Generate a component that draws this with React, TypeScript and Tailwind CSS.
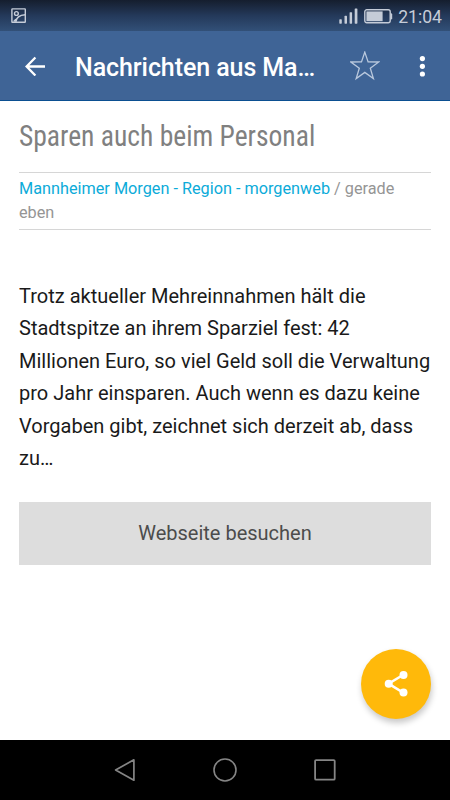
import React from 'react';

const articleLines = [
  'Trotz aktueller Mehreinnahmen hält die',
  'Stadtspitze an ihrem Sparziel fest: 42',
  'Millionen Euro, so viel Geld soll die Verwaltung',
  'pro Jahr einsparen. Auch wenn es dazu keine',
  'Vorgaben gibt, zeichnet sich derzeit ab, dass',
  'zu…'
];

function StatusBar() {
  return (
    <div className="h-[31px] flex-shrink-0 bg-gradient-to-b from-[#151e2e] via-[#24395a] via-50% to-[#325078] flex items-center justify-between pl-[11px] pr-2 text-[#c5ccd8]">
      <svg className="w-[15px] h-[15px]" viewBox="0 0 15 15" fill="none" stroke="currentColor" strokeWidth="1.4">
        <rect x="0.9" y="0.9" width="13.4" height="13.4" rx="0.5" />
        <circle cx="5.4" cy="5.5" r="1.9" />
        <path d="M4.8 14c.4-4.2 3.6-7 9.4-7.3M4.9 11.2 2.7 13.4" />
      </svg>
      <div className="flex items-center">
        {/* Signal */}
        <svg className="w-[19px] h-4" viewBox="0 0 19 16" fill="currentColor">
          <rect x="0.3" y="11.3" width="2.5" height="4.4" rx="0.6" />
          <rect x="5.5" y="7.8" width="2.5" height="7.9" rx="0.6" />
          <rect x="10.6" y="4.2" width="2.5" height="11.5" rx="0.6" />
          <rect x="15.7" y="0.4" width="2.7" height="15.3" rx="0.6" />
        </svg>
        {/* Battery */}
        <svg className="w-[29px] h-[15px] ml-1.5 mt-px" viewBox="0 0 29 15">
          <rect x="0.8" y="0.8" width="25.4" height="13" rx="2" fill="none" stroke="currentColor" strokeWidth="1.4" />
          <rect x="2.4" y="2.4" width="16.2" height="9.8" fill="currentColor" />
          <path d="M26.4 4.2h.6a1.2 1.2 0 0 1 1.2 1.2v3.8a1.2 1.2 0 0 1-1.2 1.2h-.6z" fill="currentColor" />
        </svg>
        <span className="ml-[5px] mt-0.5 text-[17.6px] leading-[22px]">21:04</span>
      </div>
    </div>
  );
}

function AppBar() {
  return (
    <header className="h-[70px] flex-shrink-0 bg-[#3f6496] border-b border-[#0b4f91] flex items-center text-white">
      <svg className="w-5 h-5 ml-[25px]" viewBox="0 0 20 20" fill="none" stroke="currentColor" strokeWidth="2.3">
        <path d="M20 10.5H2M10.4 1.5 1.6 10.5l8.8 9" />
      </svg>
      <h1 className="ml-[30px] mt-[5px] w-[241px] text-[25px] tracking-[-0.08px] font-medium whitespace-nowrap">Nachrichten aus Ma…</h1>
      <svg className="w-[30px] h-[30px] ml-[34px]" viewBox="0 0 30 30" fill="none" stroke="#b9c8dd" strokeWidth="1.3">
        <path d="m14.8 1.1 3.3 9.8 10.6.1-8.4 6.3 3.1 10.3-8.6-6.2-8.6 6.2 3.1-10.3L.9 11l10.6-.1z" />
      </svg>
      <svg className="w-1.5 h-[22px] ml-[39px]" viewBox="0 0 6 22" fill="currentColor">
        <circle cx="3.4" cy="3.6" r="2.6" />
        <circle cx="3.4" cy="11.3" r="2.6" />
        <circle cx="3.4" cy="19" r="2.6" />
      </svg>
    </header>
  );
}

function NavigationBar() {
  return (
    <nav className="h-[60px] flex-shrink-0 bg-black flex items-center justify-center gap-[76px] text-[#858585]">
      <svg className="w-6 h-6" viewBox="0 0 24 24" fill="none" stroke="currentColor" strokeWidth="1.7" strokeLinejoin="round">
        <path d="M20.9 1.8v20.4L2.6 12z" />
      </svg>
      <svg className="w-6 h-6" viewBox="0 0 24 24" fill="none" stroke="currentColor" strokeWidth="1.6">
        <circle cx="12" cy="12" r="11" />
      </svg>
      <svg className="w-6 h-6" viewBox="0 0 24 24" fill="none" stroke="currentColor" strokeWidth="1.8">
        <rect x="2.1" y="2.1" width="19.6" height="19.6" rx="1" />
      </svg>
    </nav>
  );
}

export default function App() {
  return (
    <div className="relative w-[450px] h-[800px] flex flex-col bg-white overflow-hidden font-['Roboto',sans-serif]">
      <StatusBar />
      <AppBar />

      <main className="flex-1 px-[19px]">
        <h2 className="pt-[17px] h-[71px] origin-left scale-x-[0.95] text-[29px] leading-9 text-[#808080] whitespace-nowrap font-['Roboto_Condensed','Roboto',sans-serif] [font-stretch:75%]">
          Sparen auch beim Personal
        </h2>

        <div className="h-[58px] border-y border-[#d6d6d6] pt-1 text-[16.25px] leading-6 text-[#959595] w-[412px]">
          <span className="text-[#0cabd9]">Mannheimer Morgen - Region - morgenweb</span> / gerade
          <br />
          eben
        </div>

        <p className="mt-[50px] text-[20px] leading-[32.4px] tracking-[0.01px] text-[#1a1a1a] whitespace-nowrap">
          {articleLines.map((line) => (
            <span key={line} className="block">{line}</span>
          ))}
        </p>

        <button className="mt-[27.6px] w-[412px] h-[63px] bg-[#dddddd] text-[20px] text-[#4c4c4c] flex items-center justify-center pb-0.5">
          Webseite besuchen
        </button>
      </main>

      {/* Share */}
      <button className="absolute left-[361px] top-[649px] w-[70px] h-[70px] rounded-full bg-[#ffb90a] shadow-[1px_4px_6px_rgba(0,0,0,0.22)]">
        <svg className="w-full h-full" viewBox="0 0 70 70" fill="white">
          <path d="M42 26 27.5 34.7 42 43.5" fill="none" stroke="white" strokeWidth="2.6" />
          <circle cx="42.5" cy="26" r="4" />
          <circle cx="27.7" cy="34.7" r="4" />
          <circle cx="42.5" cy="43.5" r="4" />
        </svg>
      </button>

      <NavigationBar />
    </div>
  );
}
